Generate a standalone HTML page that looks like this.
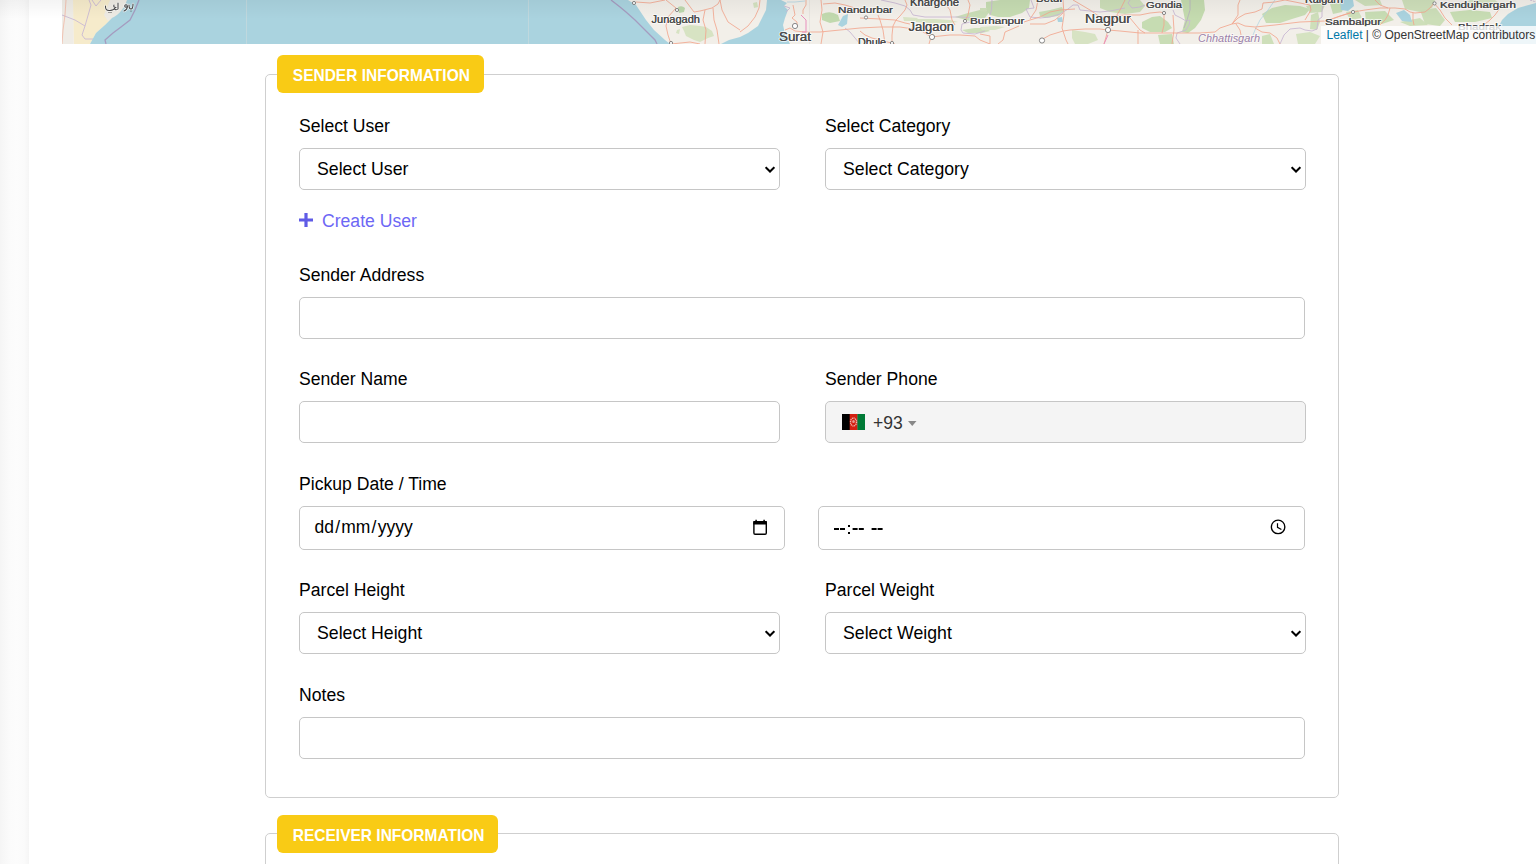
<!DOCTYPE html>
<html><head><meta charset="utf-8">
<style>
*{box-sizing:border-box;margin:0;padding:0}
html,body{width:1536px;height:864px;overflow:hidden;background:#fff;font-family:"Liberation Sans",sans-serif;color:#000}
.abs{position:absolute}
#side{left:0;top:0;width:29px;height:864px;background:linear-gradient(to right,#f5f5f5 0,#fbfbfb 35%,#fcfcfc 60%,#fafafa 85%,#f5f5f5 100%)}
#topsh{left:0;top:0;width:1536px;height:19px;background:linear-gradient(to bottom,rgba(0,0,0,0.045),rgba(0,0,0,0))}
#map{left:62px;top:0;width:1474px;height:44px;overflow:hidden;background:#f2efe9}
.fs{border:1px solid #cfcfcf;border-radius:5px}
.badge{background:#f9cb15;border-radius:6px;color:#fff;font-weight:bold;font-size:15.5px;line-height:38px;padding-left:15.8px;height:38px}
.badge span{display:inline-block;position:relative;top:1.6px;transform:scaleY(1.1);transform-origin:50% 60%}
.lbl{font-size:17.6px;line-height:20px;white-space:nowrap;margin-top:1px}
.inp{border:1px solid #c6c6c6;border-radius:5px;background:#fff;height:42px}
.sel .t{position:absolute;left:17px;top:10px;font-size:17.7px;line-height:20px;white-space:nowrap}
.chev{position:absolute;top:17px;width:10px;height:7px}
</style></head><body>
<div id="side" class="abs"></div>
<div id="map" class="abs"><svg width="1474" height="44" viewBox="62 0 1474 44" style="position:absolute;left:0;top:0;display:block">
<rect x="62" y="0" width="1474" height="44" fill="#f2efe9"/>
<path d="M62,0 L73,0 L73,44 L62,44 Z" fill="#efece6"/>
<path d="M73,0 L127,0 C124,8 120,14 112,18 L105,25 L96,33 L90,44 L74,44 Z" fill="#f6ebcb"/>
<path d="M110,0 L127,0 C124,8 120,14 112,18 L108,21 L104,15 Z" fill="#eeebe4"/>
<!-- greens -->
<g opacity="0.85">
<path d="M678,7 Q682,5 685,8 L684,12 L679,13 Z" fill="#b3d3a2"/>
<path d="M682,27 L690,25 L700,26 L706,27 L712,31 L714,36 L708,38 L700,42 L694,40 L686,36 L684,31 Z" fill="#d3e1bd"/>
<path d="M677,30 L680,29 L679,34 L676,33 Z" fill="#d3e1bd"/>
<path d="M753,3 L757,2 L758,7 L754,8 Z" fill="#cfe0ba"/>
<path d="M822,14 Q830,10 838,15 L840,21 L830,23 L822,20 Z" fill="#b9d6a4"/>
<path d="M903,17 L918,18 L915,21 L904,21 Z" fill="#d5e2bf"/>
<path d="M915,19 L935,19 L950,20 L958,22 L948,23 L930,23 L916,22 Z" fill="#d3e1bd"/>
<path d="M955,17 L968,13 L980,10 L990,11 L985,18 L970,21 Z" fill="#c3dbae"/>
<path d="M962,30 L975,28 L985,28 L990,31 L982,33 L968,33 Z" fill="#c8ddb2"/>
<path d="M986,2 L1000,0 L1030,0 L1029,8 L1022,13 L1010,17 L998,17 L990,15 L986,10 Z" fill="#bfd9a9"/>
<path d="M980,8 L987,8 L986,12 L980,11 Z" fill="#c8ddb2"/>
<path d="M980,27 L995,26 L1005,27 L995,30 L982,30 Z" fill="#d5e3c0"/>
<path d="M1039,12 L1050,10 L1062,7 L1064,11 L1058,16 L1045,18 L1040,16 Z" fill="#c3dbae"/>
<path d="M1072,30 L1085,32 L1095,34 L1098,40 L1088,44 L1075,44 L1072,38 Z" fill="#d3e2bd"/>
<path d="M1100,0 L1140,0 L1145,6 L1140,12 L1125,14 L1110,12 L1100,8 Z" fill="#c6dcb0"/>
<path d="M1142,22 L1152,17 L1160,16 L1168,22 L1172,28 L1165,32 L1150,32 L1142,28 Z" fill="#bfd9a9"/>
<path d="M1181,0 L1204,0 L1205,10 L1201,20 L1195,28 L1188,33 L1182,32 L1185,20 L1183,10 Z" fill="#bcd8a6"/>
<path d="M1158,35 L1172,34 L1174,44 L1160,44 Z" fill="#c3dbae"/>
<path d="M1262,14 L1272,8 L1285,5 L1300,6 L1310,9 L1305,15 L1292,19 L1280,23 L1266,23 Z" fill="#c1daab"/>
<path d="M1306,6 L1318,3 L1325,5 L1322,12 L1310,13 Z" fill="#c8ddb2"/>
<path d="M1311,15 L1318,12 L1320,22 L1317,30 L1310,29 Z" fill="#c8ddb2"/>
<path d="M1262,36 L1270,34 L1274,44 L1262,44 Z" fill="#c8ddb2"/>
<path d="M1296,34 L1310,32 L1320,36 L1315,44 L1298,44 Z" fill="#d0e1bb"/>
<path d="M1330,4 L1345,2 L1342,12 L1333,14 Z" fill="#c3dbae"/>
<path d="M1355,0 L1380,0 L1382,5 L1365,6 Z" fill="#c8ddb2"/>
<path d="M1365,12 L1385,11 L1394,20 L1382,24 L1366,22 Z" fill="#c1daab"/>
<path d="M1402,0 L1435,0 L1432,8 L1420,12 L1405,9 Z" fill="#c8ddb2"/>
<path d="M1400,22 L1420,18 L1428,25 L1410,26 Z" fill="#c8ddb2"/>
<path d="M1420,10 L1436,8 L1445,20 L1440,26 L1425,24 Z" fill="#c6dcb0"/>
<path d="M1450,12 L1470,10 L1490,12 L1492,18 L1475,22 L1455,22 Z" fill="#c1daab"/>
<path d="M1470,0 L1495,0 L1500,4 L1480,8 L1462,6 Z" fill="#d3e2bd"/>
<path d="M1346,12 L1358,10 L1362,18 L1350,20 Z" fill="#c8ddb2"/>
</g>
<!-- lakes & seas -->
<g fill="#aad3df">
<path d="M1340,0 L1353,0 L1354,6 L1348,11 L1341,10 Z"/>
<path d="M1396,13 L1404,10 L1410,15 L1412,22 L1402,21 Z"/>
<path d="M843,16 L848,14 L847,24 L842,27 L838,25 Z"/>
<path d="M1057,18 L1062,17 L1063,22 L1058,22 Z"/>
<path d="M127,0 L628,0 L636,5 L646,20 L654,30 L665,40 L670,44 L90,44 L96,33 L105,25 L112,18 C120,14 124,8 127,0 Z"/>
<path d="M721,44 L729,40 L740,37 L748,33 L758,26 L762,18 L766,10 L767,0 L781,0 L787,3 L784,6 L788,10 L785,18 L783,25 L785,34 L790,44 Z"/>
<path d="M1536,3 L1518,8 L1508,14 L1502,20 L1499,26 L1500,44 L1536,44 Z"/>
</g>
<g fill="none" stroke="#b3d6e2" stroke-width="0.8">
<path d="M1275,0 L1268,10 L1260,20 L1255,30 L1253,35"/>
<path d="M787,2 L795,2 L805,1"/>
</g>
<g stroke="#bfd8de" stroke-width="1">
<line x1="246.5" y1="0" x2="246.5" y2="44"/>
<line x1="528.5" y1="0" x2="528.5" y2="44"/>
</g>
<line x1="809.5" y1="0" x2="809.5" y2="44" stroke="#e4e1dc" stroke-width="0.8"/>
<!-- maritime boundaries -->
<g fill="none" stroke="#a59cc0" stroke-width="1.3">
<path d="M139,0 L135,10 L130,20 L121,27 L113,33 L105,40 L106,44"/>
<path d="M611,0 L620,7 L626,12 L635,20 L645,30 L655,40 L657,44"/>
</g>
<!-- admin boundaries -->
<g fill="none" stroke="#c9b9d4" stroke-width="0.9">
<path d="M62,15 L75,20 L85,26 L82,35 L85,39 L93,39"/>
<path d="M89,0 L91,5 L85,26"/>
<path d="M92,0 L96,6 L101,0"/>
<path d="M784,6 L790,8 L786,12"/>
<path d="M845,28 L850,32 L855,38 L860,44"/>
<path d="M881,0 L895,3 L905,6 L910,10 L913,15 L925,17 L940,17 L960,17 L975,18 L978,20 L962,24 L961,30 L963,33 L975,34 L985,31"/>
<path d="M992,0 L991.5,10 L990,15"/>
<path d="M1031,0 L1034,8 L1026,9 L1028,13 L1030,17 L1040,18 L1050,17 L1060,14 L1068,9 L1073,5 L1078,5 L1080,10 L1090,11 L1100,12 L1110,11 L1125,8"/>
<path d="M1130,0 L1128,3 L1132,8 L1140,7 L1145,5"/>
<path d="M1173,10 L1175,15 L1181,18 L1186,21 L1190,20 L1189,25 L1186,30 L1177,33 L1176,38 L1180,44"/>
<path d="M1280,44 L1284,35 L1290,29 L1300,28 L1305,30 L1312,31 L1317,29 L1318,20 L1322,17 L1322,10 L1323,5"/>
<path d="M1530,0 L1536,2" stroke-dasharray="2 1"/>
</g>
<path d="M1190,0 L1190,10 L1187,20 L1184,28" fill="none" stroke="#b9b3bd" stroke-width="0.9"/>
<!-- roads -->
<g fill="none" stroke="#f2a68f" stroke-width="0.85">
<path d="M66,0 L65,15 L63,30 L62,44" stroke-width="0.6"/>
<path d="M636,2 L650,3 L660,1 L665,0"/>
<path d="M666,0 L676,8 L668,17 L666,26 L668,35 L671,44"/>
<path d="M685,0 L694,12 L700,11 L712,8 L718,4 L720,0"/>
<path d="M705,10 L703,20 L706,30 L705,44"/>
<path d="M713,8 L714,20 L717,30 L719,44"/>
<path d="M720,0 L722,10 L728,22 L740,30"/>
<path d="M671,44 L690,42 L700,44"/>
<path d="M740,32 L748,26 L755,17 L759,8 L760,0"/>
<path d="M793,5 L795,15 L792,18 L797,22 L797,26"/>
<path d="M806,0 L806,5 L803,10 L803,14"/>
<path d="M785,30 L790,28 L795,31 L805,32 L820,32 L840,30 L860,28 L880,27 L900,27 L920,30 L931,37"/>
<path d="M821,0 L822,10 L820,22 L823,32 L821,44"/>
<path d="M823,4 L835,3 L845,5 L855,8"/>
<path d="M860,18 L880,19 L895,20 L905,23 L910,24"/>
<path d="M860,31 L865,35 L872,38 L880,40 L895,44"/>
<path d="M878,15 L880,20 L883,30 L885,44"/>
<path d="M905,0 L907,5 L905,10 L900,16 L896,20 L893,26 L892,35 L892,44"/>
<path d="M929,44 L931,37 L940,36 L950,35 L960,35 L975,36 L980,40 L990,44"/>
<path d="M947,6 L950,10 L952,20 L955,25"/>
<path d="M968,0 L970,5 L968,15 L965,21"/>
<path d="M980,34 L990,36 L990,44"/>
<path d="M1019,26 L1005,32 L1003,40 L998,44"/>
<path d="M1024,22 L1030,20 L1040,17 L1050,12 L1060,10 L1075,9"/>
<path d="M1038,0 L1036,10 L1030,19"/>
<path d="M1030,24 L1045,24 L1055,20 L1063,13"/>
<path d="M1041,40 L1050,35 L1063,31 L1070,30 L1085,29 L1100,29 L1108,30 L1120,31 L1140,33 L1200,33 L1215,32 L1220,28 L1232,24 L1238,23 L1245,26 L1255,27 L1275,25 L1300,22 L1325,21 L1353,12 L1365,10 L1380,8 L1395,8 L1405,9 L1410,12 L1415,13 L1425,12 L1430,8 L1434,3"/>
<path d="M1063,0 L1064,15 L1062,28 L1066,40 L1068,44"/>
<path d="M1073,0 L1090,10 L1100,17 L1110,16 L1125,15 L1140,15 L1150,13 L1160,12 L1164,13"/>
<path d="M1125,0 L1120,10 L1115,18 L1108,30 L1104,44"/>
<path d="M1130,18 L1140,30 L1145,33"/>
<path d="M1164,13 L1164,25 L1162,33"/>
<path d="M1173,15 L1174,30 L1172,44"/>
<path d="M1138,30 L1138,44"/>
<path d="M1232,24 L1238,18 L1245,14 L1255,12 L1262,9 L1263,3 L1275,2 L1285,0 L1300,3 L1310,5 L1311,10 L1305,20"/>
<path d="M1240,0 L1238,5 L1238,15 L1232,24"/>
<path d="M1236,24 L1240,30 L1241,35"/>
<path d="M1255,28 L1262,32 L1270,33 L1277,38 L1280,44"/>
<path d="M1375,0 L1380,5 L1388,8"/>
<path d="M1390,8 L1388,15 L1385,20 L1380,25"/>
<path d="M1413,13 L1413,20 L1414,25"/>
<path d="M1434,3 L1440,10 L1445,18 L1452,25"/>
<path d="M1500,8 L1495,15 L1490,20 L1485,24"/>
<path d="M1353,12 L1340,16 L1325,22"/>
</g>
<g fill="none" stroke="#e98fbd" stroke-width="1">
<path d="M801,15 L806,20 L806,32 L802,32"/>
<path d="M1108,35 L1104,44"/>
</g>
<!-- cities -->
<g fill="#fff" stroke="#7a7a7a" stroke-width="0.9">
<circle cx="634" cy="3" r="1.6"/>
<circle cx="677" cy="10" r="1.6"/>
<circle cx="671" cy="43" r="1.6"/>
<circle cx="795" cy="26" r="2.6"/>
<circle cx="866" cy="17.5" r="1.6"/>
<circle cx="932" cy="37" r="2.6"/>
<circle cx="965" cy="21" r="1.6"/>
<circle cx="892" cy="43" r="1.6"/>
<circle cx="1042" cy="40.5" r="2.6"/>
<circle cx="1108" cy="30" r="2.6"/>
<circle cx="1164" cy="13" r="1.6"/>
<circle cx="1353" cy="12" r="1.6"/>
<circle cx="1434.5" cy="3.4" r="1.6"/>
</g>
<!-- labels -->
<g font-family="Liberation Sans, sans-serif" fill="#4d4d4d" stroke="#ffffff" stroke-opacity="0.7" stroke-width="2" paint-order="stroke" stroke-linejoin="round">
<text x="651.5" y="23.4" font-size="11.5" textLength="48.5" lengthAdjust="spacingAndGlyphs">Junagadh</text>
<text x="779" y="41.4" font-size="12" textLength="32" lengthAdjust="spacingAndGlyphs">Surat</text>
<text x="838" y="13.3" font-size="9.5" textLength="55" lengthAdjust="spacingAndGlyphs">Nandurbar</text>
<text x="910" y="5.9" font-size="10" textLength="49" lengthAdjust="spacingAndGlyphs">Khargone</text>
<text x="908.5" y="31.3" font-size="12" textLength="45.5" lengthAdjust="spacingAndGlyphs">Jalgaon</text>
<text x="970" y="24.2" font-size="9.5" textLength="54.5" lengthAdjust="spacingAndGlyphs">Burhanpur</text>
<text x="858" y="46" font-size="10" textLength="28" lengthAdjust="spacingAndGlyphs">Dhule</text>
<text x="1036" y="1.8" font-size="10" textLength="26" lengthAdjust="spacingAndGlyphs">Betul</text>
<text x="1085" y="23.4" font-size="12" textLength="46" lengthAdjust="spacingAndGlyphs">Nagpur</text>
<text x="1146" y="8.2" font-size="9.5" textLength="36" lengthAdjust="spacingAndGlyphs">Gondia</text>
<text x="1305" y="3.2" font-size="10" textLength="38" lengthAdjust="spacingAndGlyphs">Raigarh</text>
<text x="1325" y="25" font-size="9.5" textLength="56" lengthAdjust="spacingAndGlyphs">Sambalpur</text>
<text x="1440" y="8" font-size="9.5" textLength="76" lengthAdjust="spacingAndGlyphs">Kendujhargarh</text>
<text x="1458" y="30" font-size="9.5" textLength="43" lengthAdjust="spacingAndGlyphs">Bhadrak</text>
</g><g font-family="Liberation Sans, sans-serif" fill="#4d4d4d" stroke="#4d4d4d" stroke-width="0.12">
<text x="651.5" y="23.4" font-size="11.5" textLength="48.5" lengthAdjust="spacingAndGlyphs">Junagadh</text>
<text x="779" y="41.4" font-size="12" textLength="32" lengthAdjust="spacingAndGlyphs">Surat</text>
<text x="838" y="13.3" font-size="9.5" textLength="55" lengthAdjust="spacingAndGlyphs">Nandurbar</text>
<text x="910" y="5.9" font-size="10" textLength="49" lengthAdjust="spacingAndGlyphs">Khargone</text>
<text x="908.5" y="31.3" font-size="12" textLength="45.5" lengthAdjust="spacingAndGlyphs">Jalgaon</text>
<text x="970" y="24.2" font-size="9.5" textLength="54.5" lengthAdjust="spacingAndGlyphs">Burhanpur</text>
<text x="858" y="46" font-size="10" textLength="28" lengthAdjust="spacingAndGlyphs">Dhule</text>
<text x="1036" y="1.8" font-size="10" textLength="26" lengthAdjust="spacingAndGlyphs">Betul</text>
<text x="1085" y="23.4" font-size="12" textLength="46" lengthAdjust="spacingAndGlyphs">Nagpur</text>
<text x="1146" y="8.2" font-size="9.5" textLength="36" lengthAdjust="spacingAndGlyphs">Gondia</text>
<text x="1305" y="3.2" font-size="10" textLength="38" lengthAdjust="spacingAndGlyphs">Raigarh</text>
<text x="1325" y="25" font-size="9.5" textLength="56" lengthAdjust="spacingAndGlyphs">Sambalpur</text>
<text x="1440" y="8" font-size="9.5" textLength="76" lengthAdjust="spacingAndGlyphs">Kendujhargarh</text>
<text x="1458" y="30" font-size="9.5" textLength="43" lengthAdjust="spacingAndGlyphs">Bhadrak</text>
</g>
<text x="1198" y="42" font-family="Liberation Sans, sans-serif" font-style="italic" font-size="10" fill="#9b80a8" stroke="#fff" stroke-opacity="0.6" stroke-width="1.6" paint-order="stroke" textLength="62" lengthAdjust="spacingAndGlyphs">Chhattisgarh</text>
<!-- arabic label approx -->
<g fill="none" stroke="#ffffff" stroke-opacity="0.7" stroke-width="2.6" stroke-linecap="round">
<path d="M105.5,6 Q105,11 110,10.5 Q114,10 115,8 M118,3 L118,9 Q117,10 115,9.5 M114,5 Q113,7.5 116,7.5 M127.5,6.5 Q127,10 124,11 M129,5 Q129,9 131,9 Q133,9 133,4"/>
<circle cx="126" cy="6" r="1.5"/>
</g>
<g fill="none" stroke="#454545" stroke-width="1.05" stroke-linecap="round">
<path d="M105.5,6 Q105,11 110,10.5 Q114,10 115,8 M118,3 L118,9 Q117,10 115,9.5 M114,5 Q113,7.5 116,7.5 M127.5,6.5 Q127,10 124,11 M129,5 Q129,9 131,9 Q133,9 133,4"/>
<circle cx="126" cy="6" r="1.3"/>
</g>
<g fill="#454545"><circle cx="109" cy="12.5" r="0.6"/><circle cx="111" cy="12.5" r="0.6"/><circle cx="131" cy="11" r="0.6"/></g>
</svg>
<div class="abs" style="left:1259px;top:26px;width:215px;height:18px;background:rgba(255,255,255,0.8);font-size:12px;line-height:18.5px;padding-left:5.5px;white-space:nowrap;color:#333"><span style="color:#0078a8">Leaflet</span> | © OpenStreetMap contributors</div></div>
<div id="topsh" class="abs"></div>

<!-- sender fieldset -->
<div class="abs fs" style="left:265px;top:74px;width:1074px;height:724px"></div>
<div class="abs badge" style="left:277px;top:55px;width:207px"><span>SENDER INFORMATION</span></div>

<div class="abs lbl" style="left:299px;top:115px">Select User</div>
<div class="abs inp sel" style="left:299px;top:148px;width:481px"><span class="t">Select User</span>
<svg class="chev" style="left:465px" viewBox="0 0 10 7"><path d="M0.6 1.2 L5 5.5 L9.4 1.2" fill="none" stroke="#000" stroke-width="2.1"/></svg></div>

<div class="abs lbl" style="left:825px;top:115px">Select Category</div>
<div class="abs inp sel" style="left:825px;top:148px;width:481px"><span class="t">Select Category</span>
<svg class="chev" style="left:465px" viewBox="0 0 10 7"><path d="M0.6 1.2 L5 5.5 L9.4 1.2" fill="none" stroke="#000" stroke-width="2.1"/></svg></div>

<svg class="abs" style="left:299px;top:213px" width="14" height="14" viewBox="0 0 14 14"><path d="M5.4 0h3.2v5.4H14v3.2H8.6V14H5.4V8.6H0V5.4h5.4z" fill="#5f5be6"/></svg>
<div class="abs lbl" style="left:322px;top:210px;color:#6d67f5">Create User</div>

<div class="abs lbl" style="left:299px;top:264px">Sender Address</div>
<div class="abs inp" style="left:299px;top:297px;width:1006px"></div>

<div class="abs lbl" style="left:299px;top:368px">Sender Name</div>
<div class="abs inp" style="left:299px;top:401px;width:481px"></div>

<div class="abs lbl" style="left:825px;top:368px">Sender Phone</div>
<div class="abs inp" style="left:825px;top:401px;width:481px;background:#f4f4f4">
  <svg class="abs" style="left:16px;top:12px" width="23" height="16" viewBox="0 0 23 16">
    <rect x="0" y="0" width="8" height="16" fill="#000"/><rect x="7.7" y="0" width="8" height="16" fill="#d32011"/><rect x="15.4" y="0" width="7.6" height="16" fill="#007a36"/>
    <ellipse cx="11.5" cy="8" rx="3" ry="4" fill="none" stroke="#eebbb3" stroke-width="1.3" stroke-dasharray="1.2 0.6"/><ellipse cx="11.5" cy="7.5" rx="1.3" ry="1.5" fill="#e69a90"/>
  </svg>
  <span class="abs" style="left:47px;top:11px;font-size:17.5px;line-height:20px;color:#333">+93</span>
  <svg class="abs" style="left:82px;top:19px" width="9" height="6" viewBox="0 0 9 6"><path d="M0 0h8.5L4.25 5z" fill="#888"/></svg>
</div>

<div class="abs lbl" style="left:299px;top:473px">Pickup Date / Time</div>
<div class="abs inp" style="left:299px;top:506px;width:486px;height:44px">
  <span class="abs" style="left:14.5px;top:10px;font-size:17.5px;line-height:20px;white-space:nowrap">dd<span style="margin:0 1.2px">/</span>mm<span style="margin:0 1.2px">/</span>yyyy</span>
  <svg class="abs" style="left:453px;top:12px" width="15" height="17" viewBox="0 0 15 17"><path d="M3.1 0.7v2 M11.1 0.7v2" stroke="#000" stroke-width="1.5"/><rect x="0.9" y="2.6" width="12.4" height="12.6" rx="1.2" fill="none" stroke="#000" stroke-width="1.4"/><rect x="0.3" y="2" width="13.6" height="3.4" rx="0.6" fill="#000"/></svg>
</div>
<div class="abs inp" style="left:818px;top:506px;width:487px;height:44px">
  <svg class="abs" style="left:0;top:0" width="80" height="42" viewBox="819 507 80 42"><g fill="#000">
<rect x="834" y="528" width="5" height="2"/><rect x="840" y="528" width="5" height="2"/>
<rect x="848" y="525" width="2" height="2"/><rect x="848" y="532" width="2" height="2"/>
<rect x="852.6" y="528" width="5" height="2"/><rect x="858.8" y="528" width="5" height="2"/>
<rect x="871.6" y="528" width="5" height="2"/><rect x="877.6" y="528" width="5" height="2"/></g></svg>
  <svg class="abs" style="left:451px;top:12px" width="17" height="17" viewBox="0 0 17 17"><circle cx="8.1" cy="7.9" r="6.75" fill="none" stroke="#000" stroke-width="1.35"/><path d="M7.5 4.3V8.3L11.4 10.5" fill="none" stroke="#000" stroke-width="1.2"/></svg>
</div>

<div class="abs lbl" style="left:299px;top:579px">Parcel Height</div>
<div class="abs inp sel" style="left:299px;top:612px;width:481px"><span class="t">Select Height</span>
<svg class="chev" style="left:465px" viewBox="0 0 10 7"><path d="M0.6 1.2 L5 5.5 L9.4 1.2" fill="none" stroke="#000" stroke-width="2.1"/></svg></div>

<div class="abs lbl" style="left:825px;top:579px">Parcel Weight</div>
<div class="abs inp sel" style="left:825px;top:612px;width:481px"><span class="t">Select Weight</span>
<svg class="chev" style="left:465px" viewBox="0 0 10 7"><path d="M0.6 1.2 L5 5.5 L9.4 1.2" fill="none" stroke="#000" stroke-width="2.1"/></svg></div>

<div class="abs lbl" style="left:299px;top:684px">Notes</div>
<div class="abs inp" style="left:299px;top:717px;width:1006px"></div>

<!-- receiver fieldset -->
<div class="abs fs" style="left:265px;top:833px;width:1074px;height:100px"></div>
<div class="abs badge" style="left:277px;top:815px;width:221px"><span>RECEIVER INFORMATION</span></div>
</body></html>
